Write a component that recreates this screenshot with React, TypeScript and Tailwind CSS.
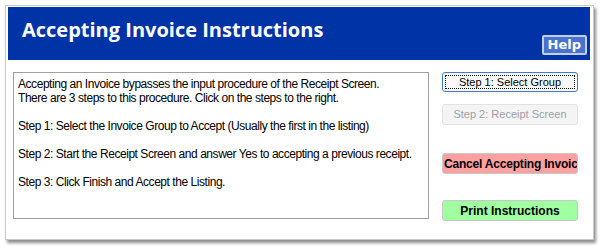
export default function App() {
  return (
    <div className="w-[605px] h-[249px] bg-white relative" style={{ fontFamily: '"Liberation Sans", Arial, sans-serif' }}>
      <div className="absolute left-[5px] top-[5px] w-[589px] h-[235px] bg-white border border-[#c8c8c8] shadow-[2px_3px_3px_rgba(0,0,0,0.45)] flex flex-col px-[2px] pt-[1px] pr-[3px]">
        {/* header */}
        <div className="h-[53px] bg-[#0033a6] flex justify-between pl-[14px] pr-[3px]">
          <h1 className="text-white font-bold text-[20px] leading-none pt-[13px] font-['Open_Sans',sans-serif]">
            Accepting Invoice Instructions
          </h1>
          <div className="self-end mb-[5px] h-[20px] px-[4px] rounded-[2px] bg-[#4a72cc] border-2 border-[#c0cef0] text-white font-bold text-[13px] leading-[16px] font-['DejaVu_Sans',sans-serif]">
            Help
          </div>
        </div>

        {/* body */}
        <div className="flex gap-[13px] pl-[5px] pt-[12px]">
          <div className="w-[416px] h-[147px] border border-[#a0a0a0] px-[4px] pt-[4px] text-[12px] leading-[14px] tracking-[-0.45px] text-black whitespace-nowrap">
            <p>Accepting an Invoice bypasses the input procedure of the Receipt Screen.</p>
            <p>There are 3 steps to this procedure. Click on the steps to the right.</p>
            <p className="mt-[14px]">Step 1: Select the Invoice Group to Accept (Usually the first in the listing)</p>
            <p className="mt-[14px]">Step 2: Start the Receipt Screen and answer Yes to accepting a previous receipt.</p>
            <p className="mt-[14px]">Step 3: Click Finish and Accept the Listing.</p>
          </div>

          <div className="flex flex-col w-[136px]">
            <button className="h-[20px] rounded-[3px] border border-[#3c7fd0] bg-[#f8f8f8] p-[2px] text-[11px] text-black">
              <span className="block h-full border border-dotted border-black leading-[13px]">Step 1: Select Group</span>
            </button>
            <button className="mt-[12px] h-[21px] rounded-[3px] border border-[#e2e2e2] bg-[#f4f4f4] text-[11px] text-[#a0a0a0]">
              Step 2: Receipt Screen
            </button>
            <button className="mt-[28px] h-[21px] rounded-[3px] border border-[#c8c8c8] bg-[#ffa0a0] text-[12px] font-bold text-black overflow-hidden whitespace-nowrap text-left pl-[1px] tracking-[-0.2px]">
              Cancel Accepting Invoice
            </button>
            <button className="mt-[26px] h-[21px] rounded-[3px] border border-[#c8c8c8] bg-[#a0ffa0] text-[12px] font-bold text-black">
              Print Instructions
            </button>
          </div>
        </div>
      </div>
    </div>
  );
}
